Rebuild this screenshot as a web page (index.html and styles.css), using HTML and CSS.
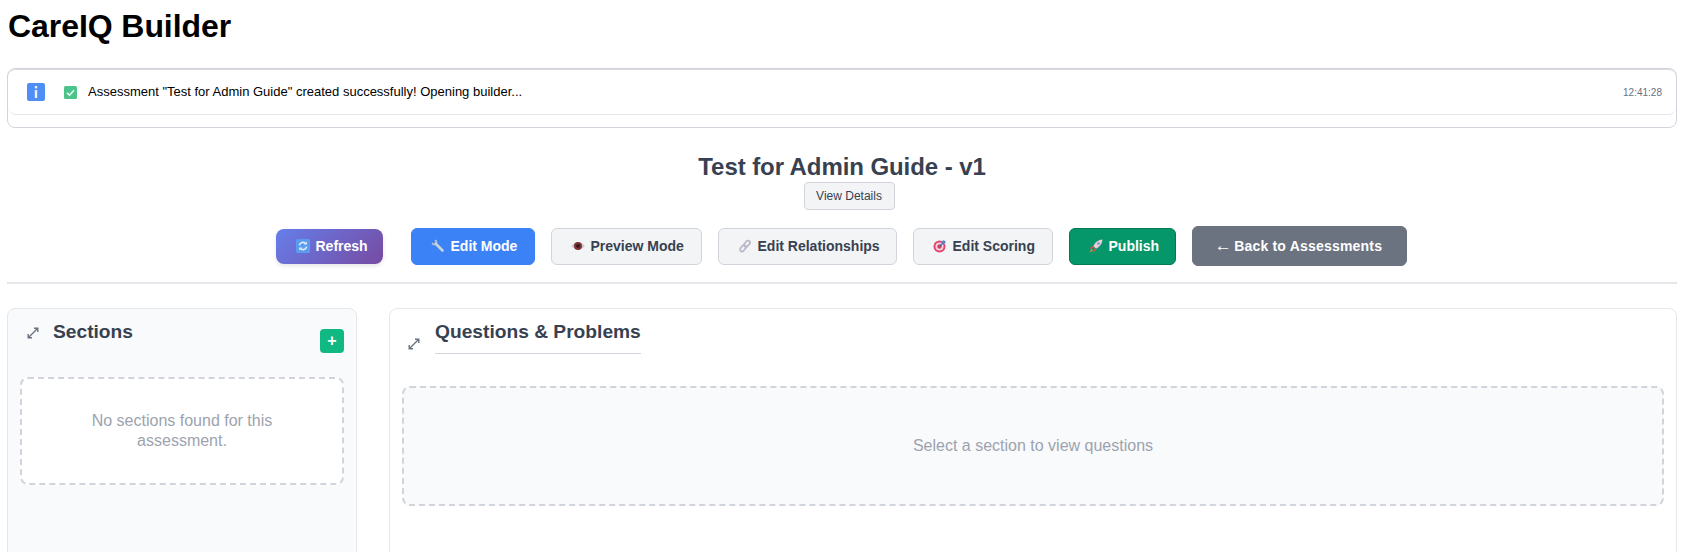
FILE: index.html
```html
<!DOCTYPE html>
<html>
<head>
    <meta charset="utf-8">
    <title>CareIQ Builder</title>
    <link rel="stylesheet" href="styles.css">
</head>
<body>
    <h1>CareIQ Builder</h1>

    <div class="alertbox">
        <div class="alertrow">
            <svg class="infoicon" viewBox="0 0 18 18"><rect width="18" height="18" rx="2" fill="#4f8ef5"/><rect x="7.8" y="3" width="2.4" height="2.4" fill="#e8f1ff"/><rect x="7.8" y="7" width="2.4" height="8" fill="#e8f1ff"/></svg>
            <svg class="checkicon" viewBox="0 0 13 13"><rect width="13" height="13" rx="1.5" fill="#4cc38a"/><path d="M3 6.8l2.5 2.4L10 4.2" fill="none" stroke="#e9fbf2" stroke-width="1.6"/></svg>
            <span class="alerttext">Assessment "Test for Admin Guide" created successfully! Opening builder...</span>
            <span class="alerttime">12:41:28</span>
        </div>
    </div>

    <div class="header">
        <h2>Test for Admin Guide - v1</h2>
        <button class="detailsbtn">View Details</button>
    </div>

    <div class="toolbar">
        <button class="btn refresh">
            <svg class="emoji" viewBox="0 0 14 14"><rect width="14" height="14" rx="1.5" fill="#5b9bf0"/><path d="M3.4 6.4a3.6 3.6 0 0 1 6.4-1.6M10.6 7.6a3.6 3.6 0 0 1-6.4 1.6" fill="none" stroke="#e4eefc" stroke-width="1.5"/><path d="M10.8 2.6v3h-3zM3.2 11.4v-3h3z" fill="#e4eefc"/></svg>
            Refresh
        </button>
        <button class="btn primary">
            <svg class="emoji" viewBox="0 0 14 14"><path d="M4.500 4.500L11.500 11.500" stroke="#c9d3dc" stroke-width="2.600" stroke-linecap="round"/><path d="M1 3.200L3.200 5.400 5.400 3.200 3.200 1 5 .8 6.300 2.500 6 5 5 6 2.500 6.300 .8 5z" fill="#c9d3dc"/></svg>
            Edit Mode
        </button>
        <button class="btn plain preview">
            <svg class="emoji" viewBox="0 0 14 14"><path d="M.2 7C3 2.800 11 2.800 13.800 7 11 11.200 3 11.200.2 7z" fill="#c9cacf"/><circle cx="7" cy="7" r="4" fill="#7e3238"/><circle cx="7" cy="7" r="1.800" fill="#2a1517"/></svg>
            Preview Mode
        </button>
        <button class="btn plain relations">
            <svg class="emoji" viewBox="0 0 14 14"><g fill="none" stroke="#bdb7c9" stroke-width="1.800"><rect x="7" y="1.200" width="4" height="7" rx="2" transform="rotate(40 9 4.700)"/><rect x="3" y="5.800" width="4" height="7" rx="2" transform="rotate(40 5 9.300)"/></g></svg>
            Edit Relationships
        </button>
        <button class="btn plain scoring">
            <svg class="emoji" viewBox="0 0 14 14"><circle cx="6.500" cy="7.500" r="6" fill="#e0456f"/><circle cx="6.500" cy="7.500" r="4" fill="#f6d5de"/><circle cx="6.500" cy="7.500" r="2.200" fill="#d93a63"/><path d="M6.500 7.500L12 2" stroke="#3b6fb5" stroke-width="1.200"/><path d="M10.500 .8l.6 1.800 1.900.6-1.500 1.400-1.900-.5-.4-1.900z" fill="#4a8fdc"/></svg>
            Edit Scoring
        </button>
        <button class="btn publish">
            <svg class="emoji" viewBox="0 0 14 14"><path d="M13.500 .5C9.500 .8 6 3.200 4.300 7l2.700 2.700C10.800 8 13.200 4.500 13.500 .5z" fill="#eccbd6"/><path d="M4.300 7L2 7.600 1 10l3.500-1zM7 9.700L6.400 12 4 13l1-3.500z" fill="#d5524f"/><path d="M.5 13.500l2-3.500 1.500 1.500z" fill="#e89a3c"/><circle cx="9.500" cy="4.500" r="1.200" fill="#5a9bd8"/></svg>
            Publish
        </button>
        <button class="btn back"><span class="arrow">←</span> Back to Assessments</button>
    </div>

    <hr class="divider"/>

    <div class="panels">
        <div class="panel sections">
            <div class="paneltop">
                <svg class="expand" viewBox="0 0 12 12"><path d="M1.500 10.500L10.500 1.500M7 1.200h3.800V5M1.200 7v3.800H5" fill="none" stroke="#6b7280" stroke-width="1.400"/></svg>
                <h3>Sections</h3>
                <button class="addbtn">+</button>
            </div>
            <div class="emptybox small">No sections found for this assessment.</div>
        </div>
        <div class="panel questions">
            <div class="paneltop">
                <svg class="expand" viewBox="0 0 12 12"><path d="M1.500 10.500L10.500 1.500M7 1.200h3.800V5M1.200 7v3.800H5" fill="none" stroke="#6b7280" stroke-width="1.400"/></svg>
                <h3 class="underlined">Questions &amp; Problems</h3>
            </div>
            <div class="emptybox wide">Select a section to view questions</div>
        </div>
    </div>
</body>
</html>
```

FILE: styles.css
```css
html {
    height: 552px;
    overflow: hidden;
}

body {
    margin: 0;
    padding: 8px 18px 0 7px;
    font-family: "Liberation Sans", Arial, sans-serif;
    color: #000000;
    background-color: #FFFFFF;
}

h1 {
    margin: 0 0 23px 1px;
    font-size: 32px;
    line-height: 37px;
    font-weight: bold;
    letter-spacing: -0.07px;
}

.alertbox {
    height: 60px;
    box-sizing: border-box;
    border: 1px solid #D1D5DB;
    border-radius: 8px;
}

.alertrow {
    display: flex;
    align-items: center;
    height: 46px;
    box-sizing: border-box;
    padding: 0 14px 0 19px;
    border-bottom: 1px solid #E5E7EB;
    border-top: 1px solid #D9DBE0;
    border-radius: 8px;
}

.infoicon {
    width: 18px;
    height: 18px;
    margin-right: 19px;
}

.checkicon {
    width: 13px;
    height: 13px;
    margin-right: 11px;
}

.alerttext {
    flex: 1;
    margin-bottom: 1px;
    font-size: 13px;
}

.alerttime {
    font-size: 10px;
    color: #6B7280;
}

.header {
    display: flex;
    flex-direction: column;
    align-items: center;
    margin-top: 25px;
}

h2 {
    margin: 0;
    font-size: 24px;
    line-height: 28px;
    font-weight: bold;
    color: #374151;
    letter-spacing: -0.08px;
}

.detailsbtn {
    width: 91px;
    height: 28px;
    margin: 1px 0 0 14px;
    padding: 0;
    font-family: inherit;
    font-size: 12px;
    color: #374151;
    background-color: #F3F4F6;
    border: 1px solid #D1D5DB;
    border-radius: 4px;
}

.toolbar {
    display: flex;
    justify-content: center;
    align-items: center;
    gap: 16px;
    margin-top: 16px;
    padding-right: 2px;
    height: 40px;
}

.btn {
    display: flex;
    align-items: center;
    height: 37px;
    box-sizing: border-box;
    padding: 0 0 0 19px;
    font-family: inherit;
    font-size: 14px;
    font-weight: bold;
    border: 1px solid transparent;
    border-radius: 6px;
}

.emoji {
    width: 14px;
    height: 14px;
    margin-right: 6px;
}

.refresh {
    width: 107px;
    height: 35px;
    margin-right: 12px;
    padding-left: 20px;
    color: #FFFFFF;
    border: 0;
    border-radius: 8px;
    background: linear-gradient(135deg, #667EEA, #764BA2);
    box-shadow: 0 2px 4px rgba(0, 0, 0, 0.1);
}

.primary {
    width: 124px;
    color: #FFFFFF;
    background-color: #3B82F6;
    border-color: #3B82F6;
}

.plain {
    color: #374151;
    background-color: #F3F4F6;
    border-color: #D1D5DB;
}

.preview {
    width: 151px;
}

.relations {
    width: 179px;
}

.scoring {
    width: 140px;
}

.publish {
    width: 107px;
    color: #FFFFFF;
    background-color: #059669;
    border-color: #047857;
}

.back {
    justify-content: center;
    width: 215px;
    height: 40px;
    padding: 0;
    color: #FFFFFF;
    background-color: #6B7280;
    border-color: #6B7280;
    letter-spacing: 0.2px;
    white-space: pre;
}

.arrow {
    font-size: 17px;
    margin: 0 -2px 0 -1px;
}

.divider {
    height: 2px;
    margin: 16px 0 24px 0;
    border: 0;
    background-color: #E5E7EB;
}

.panels {
    display: flex;
    gap: 32px;
}

.panel {
    height: 300px;
    box-sizing: border-box;
    border: 1px solid #E5E7EB;
    border-radius: 8px;
}

.sections {
    flex: 0 0 350px;
    padding: 0 12px;
    background-color: #F9FAFB;
}

.questions {
    flex: 1;
    padding: 0 12px;
}

.paneltop {
    display: flex;
}

.expand {
    width: 12px;
    height: 12px;
    margin: 18px 14px 0 7px;
}

h3 {
    margin: 12px 0 0 0;
    font-size: 19.2px;
    line-height: 22px;
    font-weight: bold;
    color: #374151;
}

.sections .paneltop {
    height: 68px;
}

.addbtn {
    width: 24px;
    height: 24px;
    margin: 20px 0 0 auto;
    padding: 0;
    font-family: inherit;
    font-size: 16px;
    line-height: 20px;
    font-weight: bold;
    color: #FFFFFF;
    background-color: #10B981;
    border: 0;
    border-radius: 4px;
}

.questions .paneltop {
    height: 77px;
}

.questions .expand {
    margin: 29px 15px 0 6px;
}

.underlined {
    height: 32px;
    border-bottom: 1px solid #D1D5DB;
}

.emptybox {
    display: flex;
    align-items: center;
    justify-content: center;
    box-sizing: border-box;
    text-align: center;
    font-size: 16px;
    line-height: 20px;
    color: #9CA3AF;
    border: 2px dashed #D1D5DB;
    border-radius: 8px;
}

.small {
    height: 108px;
    padding: 0 40px;
    background-color: #FFFFFF;
}

.wide {
    height: 120px;
    background-color: #F9FAFB;
}
```
